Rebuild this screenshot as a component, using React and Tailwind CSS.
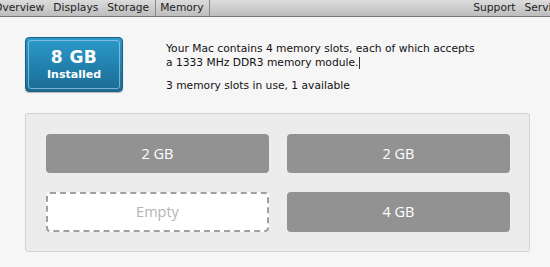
export default function App() {
  const font = { fontFamily: '"DejaVu Sans", "Liberation Sans", sans-serif' };
  return (
    <div className="w-[550px] h-[267px] bg-[#f6f6f6] overflow-hidden relative" style={font}>
      {/* top tab bar */}
      <div className="h-[17px] bg-gradient-to-b from-[#dcdcdc] to-[#bdbdbd] border-b border-[#777] flex items-center text-[10.7px] text-[#222] whitespace-nowrap">
        <span className="ml-[-6px]">Overview</span>
        <span className="ml-[9px]">Displays</span>
        <span className="ml-[9px]">Storage</span>
        <span className="ml-[6px] h-full w-px bg-[#8a8a8a]" />
        <span className="ml-[4px]">Memory</span>
        <span className="ml-[5px] h-full w-px bg-[#8a8a8a]" />
        <span className="ml-auto">Support</span>
        <span className="ml-[9px] mr-[-14px]">Service</span>
      </div>

      <div className="flex mt-[20px] ml-[25px]">
        {/* installed box */}
        <div className="w-[98px] h-[55px] rounded-[4px] border border-[#1b5f84] bg-gradient-to-b from-[#2c9bcb] to-[#1a6b95] p-[2px] shadow-[0_1px_1px_rgba(0,0,0,0.25)]">
          <div className="w-full h-full rounded-[3px] border border-[#9fd0e6]/70 flex flex-col items-center justify-center text-white leading-none">
            <div className="text-[17px] font-semibold tracking-[0.5px]">8 GB</div>
            <div className="text-[11px] font-semibold mt-[3px]">Installed</div>
          </div>
        </div>
        {/* description */}
        <div className="ml-[43px] mt-[5px] text-[10.7px] text-[#111] leading-[14px]">
          <div>Your Mac contains 4 memory slots, each of which accepts</div>
          <div>
            a 1333 MHz DDR3 memory module.
            <span className="inline-block w-px h-[12px] bg-[#333] align-middle ml-[1px]" />
          </div>
          <div className="mt-[9px]">3 memory slots in use, 1 available</div>
        </div>
      </div>

      {/* slots panel */}
      <div className="absolute left-[25px] top-[113px] w-[505px] h-[139px] rounded-[3px] border border-[#d2d2d2] bg-[#ececec] pt-[20px] pl-[20px] pr-[19px] pb-[19px]">
        <div className="grid grid-cols-2 gap-x-[18px] gap-y-[19px]" style={{ fontFamily: '"Open Sans", "DejaVu Sans", sans-serif' }}>
          <div className="h-[39px] rounded-[4px] bg-[#929292] text-white text-[14.5px] flex items-center justify-center">2 GB</div>
          <div className="h-[39px] rounded-[4px] bg-[#929292] text-white text-[14.5px] flex items-center justify-center">2 GB</div>
          <div className="h-[40px] rounded-[4px] bg-white border-2 border-dashed border-[#a0a0a0] text-[#b4b4b4] text-[14.5px] flex items-center justify-center">Empty</div>
          <div className="h-[40px] rounded-[4px] bg-[#929292] text-white text-[14.5px] flex items-center justify-center">4 GB</div>
        </div>
      </div>
    </div>
  );
}
